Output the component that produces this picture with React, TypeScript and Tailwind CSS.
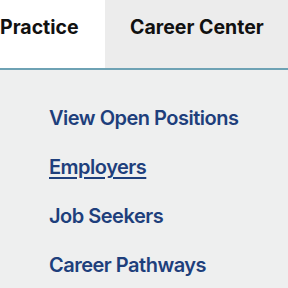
export default function App() {
  const links = ["View Open Positions", "Employers", "Job Seekers", "Career Pathways"];
  return (
    <div className="w-[288px] h-[288px] overflow-hidden bg-[#eeefef]" style={{ fontFamily: "Inter, 'Noto Sans', sans-serif" }}>
      <div className="flex h-[68px] bg-[#ececec]">
        <div className="w-[105px] bg-white flex items-center text-[19.5px] font-bold text-[#111] pb-[13px]">Practice</div>
        <div className="flex-1 flex items-center pl-[25px] text-[19.5px] font-bold text-[#111] pb-[13px]">Career Center</div>
      </div>
      <div className="h-[2px] bg-[#6ea2b4]" />
      <div className="flex flex-col pl-[49px] pt-[36px] gap-[25px]">
        {links.map((l) => (
          <div key={l} className={"text-[20px] font-semibold leading-[24px] tracking-[-0.5px] text-[#1e3f7c] " + (l === "Employers" ? "underline underline-offset-[3px]" : "")}>{l}</div>
        ))}
      </div>
    </div>
  );
}
